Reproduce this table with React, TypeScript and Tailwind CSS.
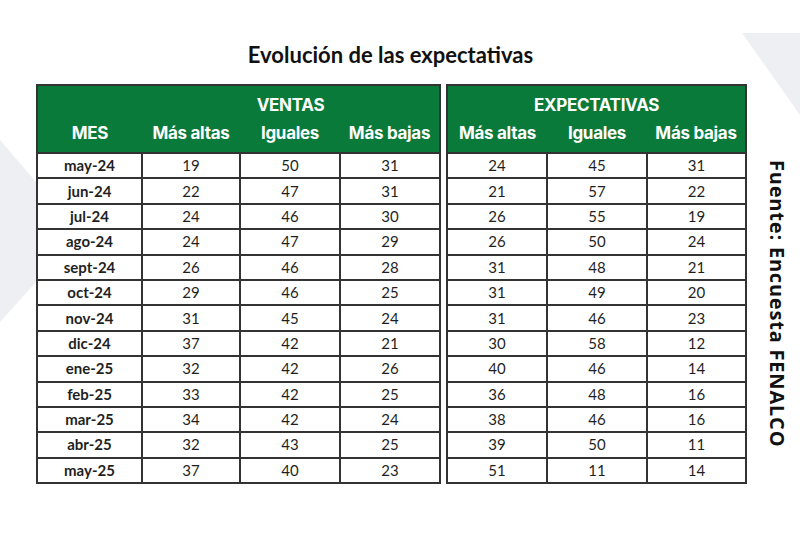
import React from "react";

type Row = [string, number, number, number, number, number, number];

const rows: Row[] = [
  ["may-24", 19, 50, 31, 24, 45, 31],
  ["jun-24", 22, 47, 31, 21, 57, 22],
  ["jul-24", 24, 46, 30, 26, 55, 19],
  ["ago-24", 24, 47, 29, 26, 50, 24],
  ["sept-24", 26, 46, 28, 31, 48, 21],
  ["oct-24", 29, 46, 25, 31, 49, 20],
  ["nov-24", 31, 45, 24, 31, 46, 23],
  ["dic-24", 37, 42, 21, 30, 58, 12],
  ["ene-25", 32, 42, 26, 40, 46, 14],
  ["feb-25", 33, 42, 25, 36, 48, 16],
  ["mar-25", 34, 42, 24, 38, 46, 16],
  ["abr-25", 32, 43, 25, 39, 50, 11],
  ["may-25", 37, 40, 23, 51, 11, 14],
];

const head = "font-['Inter',sans-serif] font-bold text-[17px] tracking-[-0.3px] text-white";
const cell = "border-2 border-[#333] h-[25.4px] p-0 text-center leading-none";

function App() {
  return (
    <div className="relative w-[800px] h-[533px] overflow-hidden bg-white font-['Lato',sans-serif] text-[#1f1f1f]">
      {/* decorative shapes in the background */}
      <svg className="absolute inset-0" width="800" height="533">
        <polygon points="0,140 36,182 36,282 0,322" fill="#eeeff2" />
        <polygon points="742,33 800,33 800,115" fill="#eeeff2" />
      </svg>

      <div className="relative flex pl-[36px] pt-[42px]">
        <div className="flex flex-col w-[709px]">
          <h1 className="text-center text-[22px] leading-[26px] font-bold text-[#111] mb-[16px]">
            Evolución de las expectativas
          </h1>
          <div className="flex gap-[5px]">
            <table className="border-collapse w-[403px] table-fixed">
              <colgroup>
                <col className="w-[105px]" />
                <col className="w-[98px]" />
                <col className="w-[100px]" />
                <col className="w-[100px]" />
              </colgroup>
              <thead className="bg-[#0a7a3b]">
                <tr className="h-[35px] border-2 border-b-0 border-[#333]">
                  <th />
                  <th colSpan={3} className={`${head} pt-[6px]`}>VENTAS</th>
                </tr>
                <tr className="h-[33px] border-2 border-t-0 border-[#333]">
                  <th className={`${head} pb-[4px]`}>MES</th>
                  <th className={`${head} pb-[4px]`}>Más altas</th>
                  <th className={`${head} pb-[4px]`}>Iguales</th>
                  <th className={`${head} pb-[4px]`}>Más bajas</th>
                </tr>
              </thead>
              <tbody className="text-[15px]">
                {rows.map((r) => (
                  <tr key={r[0]}>
                    <td className={`${cell} font-bold`}>{r[0]}</td>
                    <td className={cell}>{r[1]}</td>
                    <td className={cell}>{r[2]}</td>
                    <td className={cell}>{r[3]}</td>
                  </tr>
                ))}
              </tbody>
            </table>

            <table className="border-collapse w-[299px] table-fixed">
              <colgroup>
                <col className="w-[100px]" />
                <col className="w-[100px]" />
                <col className="w-[99px]" />
              </colgroup>
              <thead className="bg-[#0a7a3b]">
                <tr className="h-[35px] border-2 border-b-0 border-[#333]">
                  <th colSpan={3} className={`${head} pt-[6px]`}>EXPECTATIVAS</th>
                </tr>
                <tr className="h-[33px] border-2 border-t-0 border-[#333]">
                  <th className={`${head} pb-[4px]`}>Más altas</th>
                  <th className={`${head} pb-[4px]`}>Iguales</th>
                  <th className={`${head} pb-[4px]`}>Más bajas</th>
                </tr>
              </thead>
              <tbody className="text-[15px]">
                {rows.map((r) => (
                  <tr key={r[0]}>
                    <td className={cell}>{r[4]}</td>
                    <td className={cell}>{r[5]}</td>
                    <td className={cell}>{r[6]}</td>
                  </tr>
                ))}
              </tbody>
            </table>
          </div>
        </div>

        <div className="ml-[22px] pt-[118px] [writing-mode:vertical-rl] font-['Open_Sans',sans-serif] font-bold text-[20px] tracking-[0.8px] leading-[20px] text-[#111]">
          Fuente: Encuesta FENALCO
        </div>
      </div>
    </div>
  );
}

export default App;
